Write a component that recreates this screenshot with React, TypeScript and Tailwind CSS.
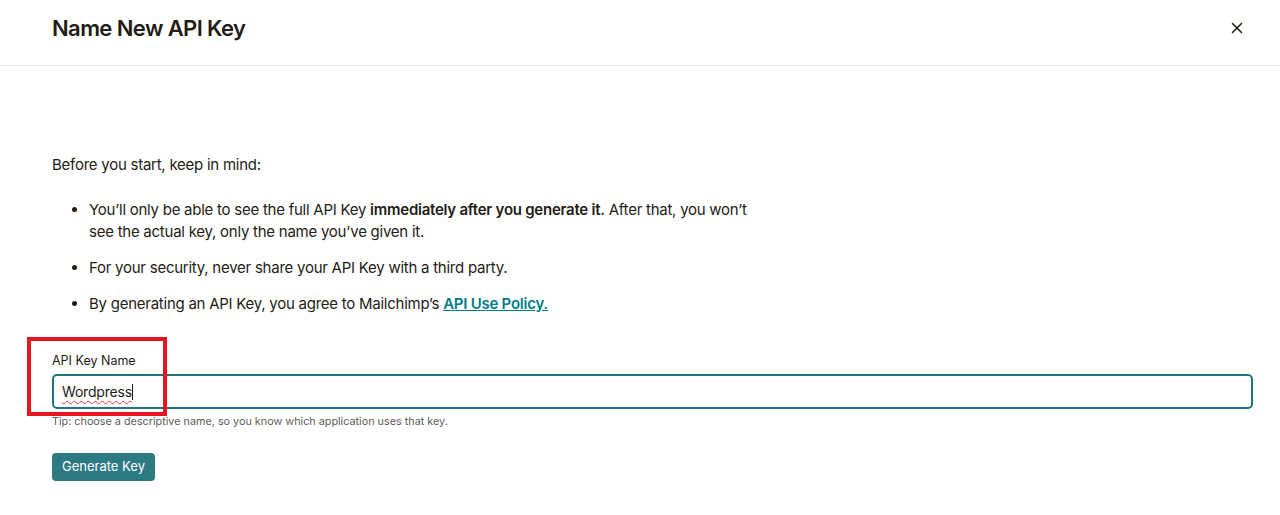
import { X } from 'lucide-react';

const font = { fontFamily: 'Inter, "Liberation Sans", sans-serif' };

export default function App() {
  return (
    <div className="w-[1280px] h-[515px] bg-white text-[#241c15] overflow-hidden" style={font}>
      <div className="h-[66px] border-b border-[#e6ebec] flex items-center justify-between pl-[52px] pr-[34px]">
        <h1 className="text-[22px] font-semibold tracking-[-0.6px] text-[#241c15] -mt-[9px]">Name New API Key</h1>
        <button className="text-[#241c15] -mt-[9px]">
          <X className="w-[18px] h-[18px]" strokeWidth={2} />
        </button>
      </div>

      <div className="pl-[52px] pr-[27px] pt-[88px]">
        <p className="text-[15px] leading-[22px] tracking-[-0.25px]">Before you start, keep in mind:</p>
        <ul className="list-disc pl-[37px] mt-[23px] text-[15px] leading-[22px] tracking-[-0.25px] w-[712px] space-y-[14px]">
          <li>
            You’ll only be able to see the full API Key <strong className="font-semibold">immediately after you generate it.</strong> After that, you won’t see the actual key, only the name you’ve given it.
          </li>
          <li>For your security, never share your API Key with a third party.</li>
          <li>
            By generating an API Key, you agree to Mailchimp’s{' '}
            <a href="#" className="font-semibold text-[#007c89] underline">API Use Policy.</a>
          </li>
        </ul>

        <div className="relative mt-[37px]">
          <label className="block text-[12.5px] leading-[18px] text-[#241c15]">API Key Name</label>
          <div className="mt-[4px] h-[35px] border-2 border-[#1f7480] rounded-[5px] flex items-center px-[8px]">
            <span className="text-[14px] tracking-[-0.2px] underline decoration-wavy decoration-[#e03a3a] decoration-1 underline-offset-[3px]">Wordpress</span>
            <span className="w-[1px] h-[16px] bg-[#241c15]" />
          </div>
          <p className="mt-[6px] text-[10.8px] leading-[14px] text-[#5c5c5c]">Tip: choose a descriptive name, so you know which application uses that key.</p>
          <div className="absolute left-[-25px] top-[-15px] w-[140px] h-[79px] border-[4px] border-[#e5161e]" />
        </div>

        <button className="mt-[24px] h-[28px] px-[10px] bg-[#2b7a84] text-white text-[13px] rounded-[4px]">Generate Key</button>
      </div>
    </div>
  );
}
